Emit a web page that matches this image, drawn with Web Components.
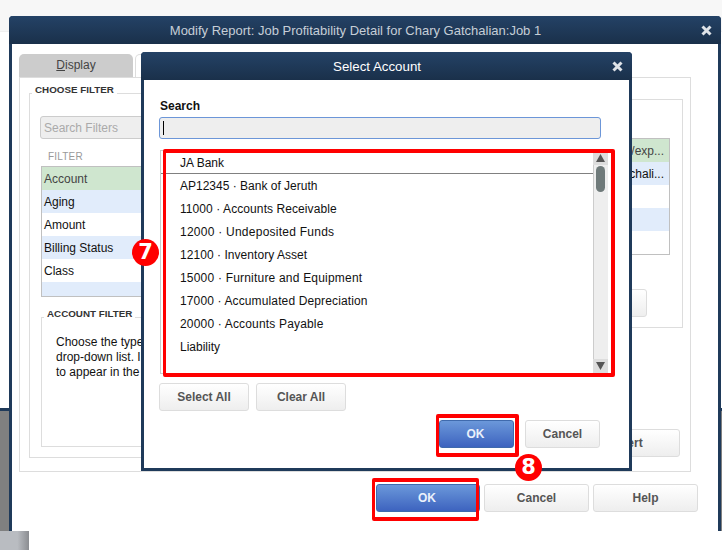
<!DOCTYPE html>
<html>
<head>
<meta charset="utf-8">
<title>Select Account</title>
<style>
html, body { margin: 0; padding: 0; background: #fff; }
body { font: 12px "Liberation Sans", Arial, sans-serif; color: #111; }
</style>
</head>
<body>

<qb-desktop>
  <qb-window heading="Modify Report: Job Profitability Detail for Chary Gatchalian:Job 1" muted
             style="left:9px;top:16px;width:712px;height:515px;--bottom:0;--title:13px">
    <div style="display:flex;gap:2px;height:23px">
      <qb-tab><u>D</u>isplay</qb-tab>
      <qb-tab active>Filters</qb-tab>
    </div>
    <qb-filter-frame>
      <qb-fieldset slot="left" legend="CHOOSE FILTER" style="width:280px;height:365px;padding:22px 0 0 10px">
        <qb-input placeholder="Search Filters" style="width:250px"></qb-input>
        <div style="padding:12px 0 3px 8px;font-size:10px;line-height:12px;color:#999;letter-spacing:.2px">FILTER</div>
        <qb-list style="margin-left:1px;width:240px;height:131px">
          <qb-row tone="green">Account</qb-row>
          <qb-row tone="blue">Aging</qb-row>
          <qb-row>Amount</qb-row>
          <qb-row tone="blue">Billing Status</qb-row>
          <qb-row>Class</qb-row>
          <qb-row tone="blue"></qb-row>
        </qb-list>
        <qb-fieldset legend="ACCOUNT FILTER" style="display:block;margin:20px 0 0 1px;width:240px;height:130px;padding:17px 0 0 14px">
          <div style="line-height:15px;white-space:nowrap">Choose the type<br>drop-down list. I<br>to appear in the</div>
        </qb-fieldset>
      </qb-fieldset>
      <div slot="right" style="width:373px;margin-top:6px">
        <qb-panel>
          <qb-list style="margin-left:auto;width:250px;height:117px">
            <qb-row tone="green" align="right">/exp...</qb-row>
            <qb-row tone="blue" align="right">chali...</qb-row>
            <qb-row></qb-row>
            <qb-row tone="blue"></qb-row>
            <qb-row></qb-row>
          </qb-list>
          <div style="display:flex;justify-content:flex-end;margin:34px 23px 0 0">
            <qb-button style="width:100px"></qb-button>
          </div>
        </qb-panel>
        <div style="display:flex;justify-content:flex-end;margin:101px 3px 0 0">
          <qb-button style="width:112px">Revert</qb-button>
        </div>
      </div>
    </qb-filter-frame>
    <div style="display:flex;justify-content:flex-end;gap:4px;margin:12px 20px 0 0">
      <qb-button primary style="width:104px">OK</qb-button>
      <qb-button style="width:105px">Cancel</qb-button>
      <qb-button style="width:105px">Help</qb-button>
    </div>
  </qb-window>

  <qb-window heading="Select Account" style="left:141px;top:52px;width:491px;height:419px;--pad:19px 21px 0 15px;--title:13.3px">
    <div style="font-weight:bold;line-height:14px;margin-bottom:4px;padding-left:1px">Search</div>
    <qb-input focused style="margin-right:7px"></qb-input>
    <qb-picker style="margin:11px 0 0 1px;height:224px">
      <qb-row current>JA Bank</qb-row>
      <qb-row>AP12345 · Bank of Jeruth</qb-row>
      <qb-row style="letter-spacing:.08px">11000 · Accounts Receivable</qb-row>
      <qb-row style="letter-spacing:.25px">12000 · Undeposited Funds</qb-row>
      <qb-row style="letter-spacing:.05px">12100 · Inventory Asset</qb-row>
      <qb-row style="letter-spacing:.2px">15000 · Furniture and Equipment</qb-row>
      <qb-row style="letter-spacing:.13px">17000 · Accumulated Depreciation</qb-row>
      <qb-row style="letter-spacing:.17px">20000 · Accounts Payable</qb-row>
      <qb-row>Liability</qb-row>
    </qb-picker>
    <div style="display:flex;gap:7px;margin-top:9px">
      <qb-button style="width:90px">Select All</qb-button>
      <qb-button style="width:90px">Clear All</qb-button>
    </div>
    <div style="display:flex;justify-content:flex-end;gap:11px;margin:9px 8px 0 0">
      <qb-button primary style="width:75px">OK</qb-button>
      <qb-button style="width:75px">Cancel</qb-button>
    </div>
  </qb-window>

  <qb-mark style="left:163px;top:149px;width:452px;height:228px"></qb-mark>
  <qb-mark style="left:436px;top:414px;width:83px;height:43px"></qb-mark>
  <qb-mark style="left:372px;top:478px;width:107px;height:43px;border-right-width:3px"></qb-mark>
  <qb-badge style="left:132px;top:239px">7</qb-badge>
  <qb-badge style="left:515px;top:454px">8</qb-badge>
</qb-desktop>

<script>
function define(name, css, html, extra) {
  const template = document.createElement('template');
  template.innerHTML = `<style>${css}</style>${html}`;
  class Item extends HTMLElement {
    constructor() {
      super();
      this.attachShadow({ mode: 'open' });
      this.shadowRoot.appendChild(template.content.cloneNode(true));
    }
    connectedCallback() {
      if (extra) extra(this, this.shadowRoot);
    }
  }
  customElements.define(name, Item);
}

// page behind the windows
define('qb-desktop', `
  :host { display: block; position: relative; width: 722px; height: 550px; overflow: hidden; background: #fff; }
  .strip { height: 32px; background: #f7f7f7; border-bottom: 1px solid #f0f0f0; box-sizing: border-box; }
  .white { height: 376px; }
  .grey { height: 123px; box-sizing: border-box; background: #808080; border-top: 3px solid #1f3a5a; }
  .foot { height: 19px; }
  .block { width: 29px; height: 19px; background: linear-gradient(90deg, #b9bcc1 0, #b9bcc1 60%, #8b8d91 100%); }
`, `
  <div class="strip"></div><div class="white"></div><div class="grey"></div>
  <div class="foot"><div class="block"></div></div>
  <slot></slot>
`);

define('qb-window', `
  :host { position: absolute; display: flex; flex-direction: column; box-sizing: border-box; background: #fff;
    border: 3px solid #1f3a5a; border-top: 0; border-bottom-width: var(--bottom, 3px); border-radius: 4px 4px 0 0; }
  .bar { flex: none; height: 28px; margin: 0 -3px; display: flex; align-items: center; padding: 0 9px 0 0;
    border-radius: 4px 4px 0 0; background: linear-gradient(#244266, #1a304a); color: #fff; font-size: var(--title, 14px); }
  :host([muted]) .bar { color: #c6ced7; }
  .title { flex: 1; text-align: center; padding: 1px 0 0 1px; white-space: nowrap; }
  svg { display: block; flex: none; }
  .body { flex: 1; min-height: 0; padding: var(--pad, 10px 0 0 7px); }
`, `
  <div class="bar"><div class="title"></div>
    <svg width="11" height="11" viewBox="0 0 11 11"><path d="M1.5 1.5 9.5 9.5M9.5 1.5 1.5 9.5" stroke="#dfe3e8" stroke-width="3"/></svg>
  </div>
  <div class="body"><slot></slot></div>
`, (el, root) => { root.querySelector('.title').textContent = el.getAttribute('heading'); });

define('qb-tab', `
  :host { display: block; box-sizing: border-box; width: 114px; height: 23px; line-height: 23px; text-align: center;
    background: #ccc; border-radius: 5px 5px 0 0; color: #444; }
  :host([active]) { background: #fff; border: 1px solid #ddd; border-bottom: 0; line-height: 21px; }
`, `<slot></slot>`);

define('qb-filter-frame', `
  :host { display: flex; box-sizing: border-box; width: 672px; height: 395px; border: 1px solid #ddd; padding: 15px 0 0 9px; }
  ::slotted([slot=left]) { margin-right: 1px; }
`, `<slot name="left"></slot><slot name="right"></slot>`);

define('qb-fieldset', `
  :host { display: block; position: relative; box-sizing: border-box; border: 1px solid #ddd; }
  .legend { position: absolute; left: 2px; top: -10px; padding: 0 3px; background: #fff; font-size: 9.8px; line-height: 12px;
    font-weight: bold; color: #333; white-space: nowrap; }
`, `<div class="legend"></div><slot></slot>`,
(el, root) => { root.querySelector('.legend').textContent = el.getAttribute('legend'); });

define('qb-panel', `
  :host { display: block; box-sizing: border-box; height: 229px; border: 1px solid #ddd; padding: 38px 12px 0 0; }
`, `<slot></slot>`);

define('qb-input', `
  :host { display: block; box-sizing: border-box; height: 23px; background: #eee; border: 1px solid #ccc; border-radius: 3px;
    padding-left: 3px; line-height: 23px; color: #aaa; }
  :host([focused]) { height: 22px; border-color: #6c96d8; }
  .caret { display: none; width: 1px; height: 14px; margin-top: 3px; background: #000; }
  :host([focused]) .caret { display: block; }
`, `<div class="caret"></div><span class="text"></span>`,
(el, root) => { root.querySelector('.text').textContent = el.getAttribute('placeholder') || ''; });

define('qb-list', `
  :host { display: block; box-sizing: border-box; border: 1px solid #c0c0c0; overflow: hidden; background: #fff; }
`, `<slot></slot>`);

define('qb-row', `
  :host { display: block; box-sizing: border-box; height: 23px; line-height: 25px; padding: 0 0 0 2px; white-space: nowrap; color: #111; }
  :host([tone=green]) { background: #cfe6cf; color: #444; }
  :host([tone=blue]) { background: #e1ecfb; }
  :host([align=right]) { text-align: right; padding-right: 5px; }
  :host([current]) { border-bottom: 1px solid #808080; line-height: 24px; }
`, `<slot></slot>`);

define('qb-picker', `
  :host { display: flex; box-sizing: border-box; border: 1px solid #ccc; border-right: 0; }
  .rows { flex: 1; min-width: 0; }
  .rows ::slotted(qb-row) { padding-left: 19px; }
  .scroll { flex: none; width: 15px; display: flex; flex-direction: column; background: #eee; border-left: 1px solid #ccc; box-sizing: border-box; }
  .end { height: 14px; background: #ddd; display: flex; align-items: center; justify-content: center; flex: none; margin-left: -1px; }
  .thumb { width: 9px; height: 26px; margin: 1px 0 0 2px; border-radius: 5px; background: #6f7a7a; }
  .gap { flex: 1; }
  svg { display: block; }
`, `
  <div class="rows"><slot></slot></div>
  <div class="scroll">
    <div class="end"><svg width="9" height="8" viewBox="0 0 9 8"><path d="M4.5 0 9 8H0Z" fill="#555"/></svg></div>
    <div class="thumb"></div>
    <div class="gap"></div>
    <div class="end"><svg width="9" height="8" viewBox="0 0 9 8"><path d="M0 0H9L4.5 8Z" fill="#555"/></svg></div>
  </div>
`);

define('qb-button', `
  :host { display: block; box-sizing: border-box; height: 28px; line-height: 26px; text-align: center; font-weight: bold; color: #555;
    border: 1px solid #ddd; border-radius: 3px; background: linear-gradient(#fff, #eee); white-space: nowrap; }
  :host([primary]) { color: #eaf1fb; border-color: #3f6aad; background: linear-gradient(#6b98da, #3d63bf); padding-right: 2px; }
`, `<slot></slot>`);

define('qb-mark', `
  :host { position: absolute; box-sizing: border-box; border: 4px solid #f00; border-left-width: 3px; border-radius: 2px; }
`, ``);

define('qb-badge', `
  :host { position: absolute; width: 27px; height: 27px; border-radius: 50%; background: #f00; color: #fff;
    font: bold 21px/27px "DejaVu Sans", sans-serif; text-align: center; }
`, `<slot></slot>`);
</script>
</body>
</html>
